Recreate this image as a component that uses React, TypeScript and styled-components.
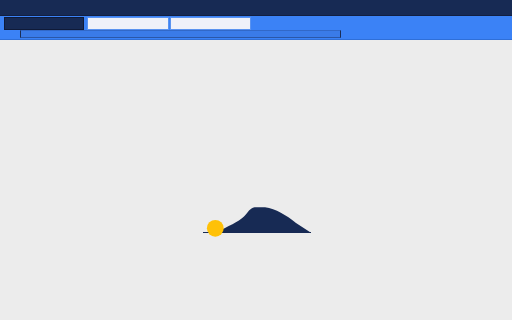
import { createGlobalStyle, styled } from "styled-components";

const GlobalStyle = createGlobalStyle`
  html, body {
    margin: 0;
    padding: 0;
    background: #ececec;
    font-family: "Liberation Sans", Arial, sans-serif;
  }
`;

const Page = styled.div`
  width: 512px;
  height: 320px;
  display: flex;
  flex-direction: column;
  background: #ececec;
  overflow: hidden;
`;

const TopBar = styled.div`
  height: 15px;
  background: #172a54;
  border-bottom: 1px solid #121f40;
`;

const Toolbar = styled.div`
  height: 23px;
  background: #3b82f6;
  border-bottom: 1px solid #2f6fd8;
  display: flex;
  flex-direction: column;
`;

const Tabs = styled.div`
  display: flex;
  padding: 1px 0 0 4px;
  height: 13px;
`;

const Tab = styled.div<{ $active?: boolean; $gap?: number; $w: number }>`
  box-sizing: border-box;
  width: ${(p) => p.$w}px;
  height: 13px;
  margin-left: ${(p) => p.$gap ?? 0}px;
  background: ${(p) => (p.$active ? "#172a54" : "#eff1f9")};
  border: 1px solid ${(p) => (p.$active ? "#0f1a38" : "#5a93f0")};
`;

const Track = styled.div`
  box-sizing: border-box;
  margin-left: 20px;
  width: 321px;
  height: 8px;
  background: #3a7be8;
  border-top: 1px solid #3168c8;
  border-left: 1px solid #1b2d55;
  border-right: 1px solid #1b2d55;
  border-bottom: 1px solid #2a57a8;
`;

const Stage = styled.div`
  flex: 1;
  display: flex;
  justify-content: center;
  padding-top: 162px;
  padding-left: 1px;
`;

function Hill() {
  return (
    <svg width="110" height="36" viewBox="201 202 110 36">
      <line x1="202" y1="232.5" x2="310" y2="232.5" stroke="#172a54" strokeWidth="1" />
      <path
        d="M214 232.8 C228 226 237 222 243 216.5 C247 212.5 249 208 253.5 207.3 L264 207.3 C275 209 285 215 295 223 L310 232.8 Z"
        fill="#172a54"
      />
      <circle cx="214.3" cy="228.3" r="8.4" fill="#ffc107" />
    </svg>
  );
}

export default function App() {
  return (
    <>
      <GlobalStyle />
      <Page>
        <TopBar />
        <Toolbar>
          <Tabs>
            <Tab $active $w={80} />
            <Tab $gap={3} $w={82} />
            <Tab $gap={1} $w={81} />
          </Tabs>
          <Track />
        </Toolbar>
        <Stage>
          <Hill />
        </Stage>
      </Page>
    </>
  );
}
